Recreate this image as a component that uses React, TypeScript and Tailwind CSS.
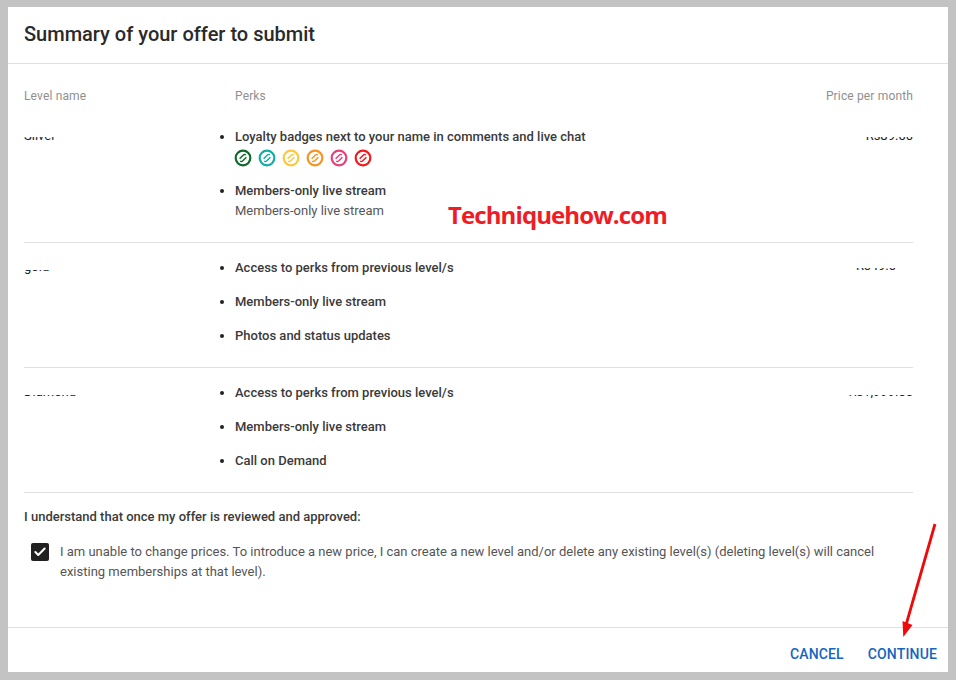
import { Check } from "lucide-react";

const badgeColors = ["#0f6b2c", "#12ada6", "#fdc83c", "#f7931e", "#e9407a", "#f8171c"];

function Badge({ color }: { color: string }) {
  return (
    <svg width="18" height="18" viewBox="0 0 18 18" fill="none">
      <circle cx="9" cy="9" r="7.3" stroke={color} strokeWidth="2.2" />
      <path d="M5.6 9.8 L9.4 6 Q10.6 5 11.8 6 M12.4 8.2 L8.6 12 Q7.4 13 6.2 12" stroke={color} strokeWidth="1.5" />
    </svg>
  );
}

// only the bottom few pixels of the name/price are visible in the reference
function ClippedText({ children, right, height }: { children: string; right?: boolean; height: string }) {
  return (
    <div className={`${height} overflow-hidden flex items-end text-[13px] leading-5 text-[#222] ${right ? "justify-end" : ""}`}>
      <span className="shrink-0 whitespace-nowrap">{children}</span>
    </div>
  );
}

function Perk({ title, sub, children }: { title: string; sub?: string; children?: React.ReactNode }) {
  return (
    <li className="relative">
      <span className="absolute left-[-15px] top-[8px] w-1 h-1 rounded-full bg-[#222]" />
      <div className="text-[13px] leading-5 font-medium text-[#3a3a3a]">{title}</div>
      {children}
      {sub && <div className="text-[13px] leading-5 text-[#555]">{sub}</div>}
    </li>
  );
}

export default function App() {
  return (
    <div className="relative w-[956px] h-[680px] bg-[#c3c3c3] pt-[7px] pl-2 font-['Roboto',sans-serif]">
      <div className="w-[940px] h-[665px] bg-white flex flex-col">
        <div className="h-[57px] shrink-0 border-b border-[#e0e0e0] px-4 pb-[3px] flex items-center">
          <h1 className="text-xl font-medium text-[#2a2a2a]">Summary of your offer to submit</h1>
        </div>

        <div className="flex-1 pl-4 pr-[35px]">
          <div className="flex pt-6 text-xs leading-4 text-[#8f8f8f] tracking-[0.15px]">
            <div className="w-[211px] shrink-0">Level name</div>
            <div className="flex-1">Perks</div>
            <div className="w-[120px] shrink-0 text-right">Price per month</div>
          </div>

          <div className="mt-[20px]">
            <div className="flex h-[119px] border-b border-[#e0e0e0]">
              <div className="w-[211px] shrink-0 pt-[13px]">
                <ClippedText height="h-[9px]">Silver</ClippedText>
              </div>
              <ul className="flex-1 flex flex-col pt-[3px] gap-[14px]">
                <Perk title="Loyalty badges next to your name in comments and live chat">
                  <div className="flex gap-[6px] mt-[2px] -ml-[1px]">
                    {badgeColors.map((c) => <Badge key={c} color={c} />)}
                  </div>
                </Perk>
                <Perk title="Members-only live stream" sub="Members-only live stream" />
              </ul>
              <div className="w-[120px] shrink-0 pt-[13px]">
                <ClippedText right height="h-[9px]">Rs89.00</ClippedText>
              </div>
            </div>

            <div className="flex h-[125px] border-b border-[#e0e0e0]">
              <div className="w-[211px] shrink-0 pt-[27px]">
                <ClippedText height="h-[7px]">gold</ClippedText>
              </div>
              <ul className="flex-1 flex flex-col pt-[15px] gap-[14px]">
                <Perk title="Access to perks from previous level/s" />
                <Perk title="Members-only live stream" />
                <Perk title="Photos and status updates" />
              </ul>
              <div className="w-[120px] shrink-0 pt-[25px] pr-[17px]">
                <ClippedText right height="h-[8px]">Rs49.0</ClippedText>
              </div>
            </div>

            <div className="flex h-[125px] border-b border-[#e0e0e0]">
              <div className="w-[211px] shrink-0 pt-[27px]">
                <ClippedText height="h-[7px]">Diamond</ClippedText>
              </div>
              <ul className="flex-1 flex flex-col pt-[15px] gap-[14px]">
                <Perk title="Access to perks from previous level/s" />
                <Perk title="Members-only live stream" />
                <Perk title="Call on Demand" />
              </ul>
              <div className="w-[120px] shrink-0 pt-[27px]">
                <ClippedText right height="h-[7px]">Rs1,999.00</ClippedText>
              </div>
            </div>
          </div>

          <p className="mt-[14px] text-[13px] leading-5 font-medium text-[#3a3a3a]">
            I understand that once my offer is reviewed and approved:
          </p>
          <div className="flex mt-[15px] pl-[7px] gap-[11px]">
            <div className="w-[18px] h-[18px] mt-[1px] shrink-0 rounded-[2px] bg-[#212121] flex items-center justify-center">
              <Check className="w-[14px] h-[14px] text-white" strokeWidth={3.5} />
            </div>
            <p className="text-[13px] leading-5 text-[#555]">
              I am unable to change prices. To introduce a new price, I can create a new level and/or delete any existing level(s) (deleting level(s) will cancel existing memberships at that level).
            </p>
          </div>
        </div>

        <div className="h-[45px] shrink-0 border-t border-[#e0e0e0] pt-[7px] flex items-center justify-end gap-6 pr-[11px] text-sm font-medium tracking-[0.15px] text-[#1565c0]">
          <button>CANCEL</button>
          <button>CONTINUE</button>
        </div>
      </div>

      <div className="absolute left-[448px] top-[199px] text-2xl leading-8 font-bold text-[#ee1c25] font-['Open_Sans',sans-serif] tracking-[-0.9px]">
        Techniquehow.com
      </div>

      <svg className="absolute left-[895px] top-[520px]" width="50" height="120" viewBox="0 0 50 120" fill="none">
        <path d="M40 4 L11 105" stroke="#ee0a0a" strokeWidth="2.8" />
        <path d="M7.5 101 L8.3 117 L17.5 105 Z" fill="#ee0a0a" />
      </svg>
    </div>
  );
}
